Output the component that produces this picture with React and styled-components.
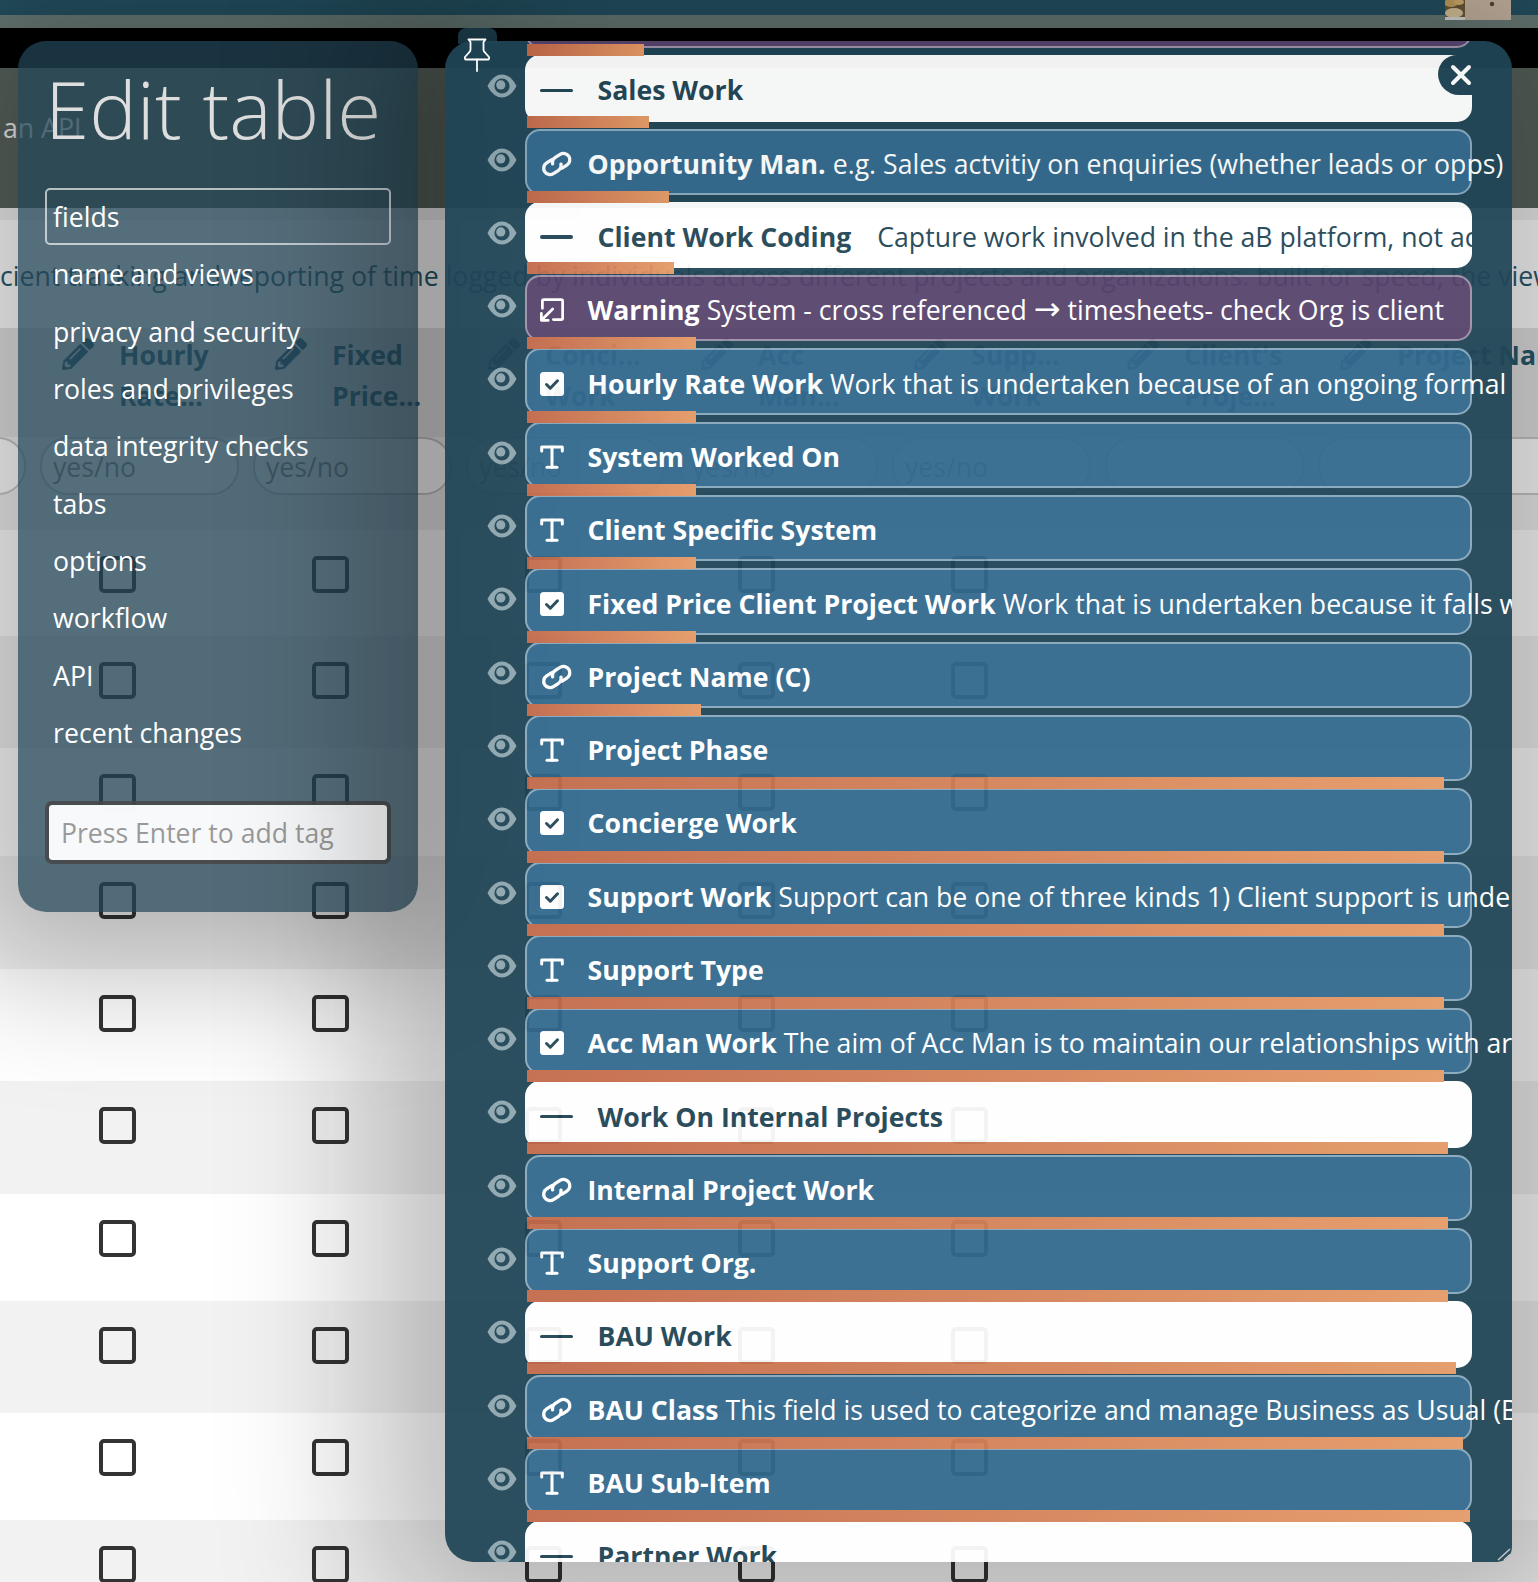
import React from "react";
import styled, { createGlobalStyle } from "styled-components";
import { FaPencilAlt } from "react-icons/fa";

const Global = createGlobalStyle`
  html, body { margin: 0; padding: 0; background: #fff; }
  * { box-sizing: border-box; }
`;

const Page = styled.div`
  position: relative;
  width: 1538px;
  height: 1582px;
  overflow: hidden;
  background: #fff;
  font-family: "Open Sans", "DejaVu Sans", sans-serif;
  font-size: 26.65px;
  color: #2a5a70;
`;
const TopBar = styled.div`height: 15px; background: #245162;`;
const SubBar = styled.div`height: 13px; background: #687a76;`;
const BlackBar = styled.div`height: 40px; background: #000;`;
const Header = styled.div`
  height: 140px;
  background: #59645d;
  padding: 41px 0 0 3px;
  color: #eee;
  line-height: 38px;
`;
const GrayBand = styled.div`height: 12px; background: #f0f0f0;`;
const Description = styled.div`
  height: 108px;
  display: flex;
  align-items: center;
  white-space: nowrap;
  padding-top: 4px;
`;
const TableHead = styled.div`
  display: flex;
  height: 109px;
  margin-left: -180px;
  background: #e3e3e3;
  width: 1900px;
`;
const HeadCell = styled.div`
  flex: 0 0 213px;
  display: flex;
  padding: 10px 0 0 29px;
  gap: 25px;
  font-weight: 700;
  line-height: 40.5px;
  white-space: pre;
  svg { flex: 0 0 32px; width: 32px; height: 32px; }
`;
const HeadLabel = styled.div`margin-top: -3px;`;
const FilterRow = styled.div`
  display: flex;
  height: 93px;
  margin-left: -180px;
  width: 1900px;
  background: #f0f0f0;
`;
const FilterCell = styled.div`
  flex: 0 0 ${p => (p.$last ? 400 : 213)}px;
  padding: 0 7px;
`;
const Pill = styled.div`
  height: 58px;
  border: 2px solid #c9c9c9;
  border-radius: 28px;
  background: #fff;
  padding-left: 11px;
  line-height: 56px;
  color: #8c8c8c;
`;
const DataRow = styled.div`
  display: flex;
  margin-left: -180px;
  width: 1900px;
  height: ${p => p.$h}px;
  background: ${p => (p.$alt ? "#f2f2f2" : "#fff")};
`;
const DataCell = styled.div`flex: 0 0 213px; padding: 26px 0 0 66px;`;
const Check = styled.div`
  width: 37px;
  height: 37px;
  border: 4px solid #333;
  border-radius: 5px;
`;
const Thumb = styled.svg`
  position: absolute;
  left: 1445px;
  top: 0;
  width: 66px;
  height: 20px;
`;

const LeftPanel = styled.aside`
  position: absolute;
  left: 18px;
  top: 41px;
  width: 400px;
  height: 871px;
  border-radius: 28px;
  background: rgba(34, 67, 83, 0.77);
  box-shadow: 0 0 130px 65px rgba(0, 0, 0, 0.25);
  padding: 0 27px;
  color: #fff;
`;
const Title = styled.h1`
  margin: 0;
  height: 147px;
  font-size: 80px;
  font-weight: 300;
  line-height: 134px;
  color: #dedede;
  white-space: nowrap;
`;
const Nav = styled.nav`display: flex; flex-direction: column;`;
const NavItem = styled.div`
  height: 57.3px;
  display: flex;
  align-items: center;
  padding-left: 6px;
  border: 2px solid ${p => (p.$on ? "rgba(255,255,255,.65)" : "transparent")};
  border-radius: 5px;
  white-space: nowrap;
  font-size: 26.7px;
`;
const TagInput = styled.div`
  margin-top: 40px;
  height: 63px;
  width: 346px;
  border: 4px solid rgba(70, 70, 70, 0.85);
  border-radius: 7px;
  background: rgba(255, 255, 255, 0.96);
  background-clip: padding-box;
  color: #999;
  padding-left: 12px;
  line-height: 56px;
  font-size: 26.6px;
  white-space: nowrap;
`;

const RightPanel = styled.section`
  position: absolute;
  left: 444.5px;
  top: 41px;
  width: 1067.5px;
  height: 1521px;
  border-radius: 28px 28px 15px 28px;
  background: #204556;
  opacity: 0.945;
  box-shadow: 0 0 150px 75px rgba(0, 0, 0, 0.265);
`;
const Clip = styled.div`
  position: absolute;
  inset: 0;
  overflow: hidden;
  border-radius: inherit;
`;
const List = styled.div`
  display: flex;
  flex-direction: column;
  gap: 7px;
  margin-top: -59px;
  padding-left: 42.5px;
`;
const Item = styled.div`
  display: flex;
  gap: 8px;
`;
const EyeIcon = styled.svg`
  flex: 0 0 30px;
  width: 30px;
  height: 24px;
  margin-top: 19px;
`;
const Row = styled.div`
  position: relative;
  flex: 0 0 947px;
  min-width: 0;
  height: 66.3px;
  border-radius: 15px;
  background: ${p => ({ white: "#fff", purple: "#57436c", blue: "#32698e" }[p.$kind])};
  border: ${p => (p.$kind === "white" ? "none" : "2px solid rgba(255,255,255,.42)")};
`;
const RowBody = styled.div`
  height: 100%;
  display: flex;
  align-items: center;
  padding: 4px 0 0 ${p => (p.$kind === "white" ? 15 : 13)}px;
  white-space: nowrap;
  overflow: ${p => (p.$kind === "white" ? "hidden" : "visible")};
  border-radius: inherit;
  color: ${p => (p.$kind === "white" ? "#1f4454" : "#fff")};
`;
const IconSlot = styled.span`
  flex: 0 0 ${p => (p.$kind === "white" ? 57.5 : 47.5)}px;
  display: flex;
  align-items: center;
  svg { display: block; overflow: visible; }
`;
const Name = styled.b`font-weight: 700;`;
const Desc = styled.span`
  margin-left: ${p => (p.$kind === "white" ? 26 : 7)}px;
  font-weight: 400;
`;
const Arrow = styled.span`
  font-size: 32px;
  line-height: 1;
`;
const Bar = styled.div`
  position: absolute;
  left: ${p => (p.$kind === "white" ? 2 : 0)}px;
  bottom: ${p => (p.$kind === "white" ? -6 : -10)}px;
  height: 12px;
  background: linear-gradient(to right, #c2694a, #e59a66);
  z-index: 1;
`;
const MinusBar = styled.span`
  display: block;
  width: 33px;
  height: 3.5px;
  border-radius: 2px;
  background: #1f4454;
`;
const PinTab = styled.div`
  position: absolute;
  left: 458px;
  top: 28px;
  width: 39px;
  height: 16px;
  border-radius: 8px 8px 0 0;
  background: #1e4050;
`;
const PinIcon = styled.svg`
  position: absolute;
  left: 464px;
  top: 38px;
  width: 26px;
  height: 34px;
`;
const Close = styled.div`
  position: absolute;
  left: 993.5px;
  top: 14px;
  width: 34px;
  height: 40px;
  background: #204556;
  border-radius: 20px 0 0 22px;
  display: flex;
  align-items: center;
  justify-content: flex-start;
  padding-left: 12px;
`;
const Grip = styled.svg`
  position: absolute;
  right: 1px;
  bottom: 1px;
  width: 16px;
  height: 16px;
`;

const Eye = () => (
  <EyeIcon viewBox="0 0 30 24">
    <path d="M.5 12C5 3.5 10 .5 15 .5S25 3.5 29.5 12C25 20.5 20 23.5 15 23.5S5 20.5 .5 12Z" fill="#8ea6af" />
    <circle cx="15" cy="12" r="7.6" fill="#204556" />
    <circle cx="13.8" cy="10.9" r="4.6" fill="#8ea6af" />
  </EyeIcon>
);
const LinkIcon = () => (
  <svg width="37" height="28" viewBox="0 0 32 24" fill="none" stroke="#fff" strokeWidth="2.9" strokeLinecap="round">
    <g transform="translate(-1.5 0) rotate(-32 16 12)">
      <path d="M14 6.5H9.15a5.5 5.5 0 0 0 0 11H14a5.5 5.5 0 0 0 5-3.5" />
      <path d="M18 17.5h4.85a5.5 5.5 0 0 0 0-11H18a5.5 5.5 0 0 0-5 3.5" />
    </g>
  </svg>
);
const TIcon = () => (
  <svg width="24" height="24" viewBox="0 0 24 24" fill="none" stroke="#fff" strokeWidth="3" strokeLinecap="round" strokeLinejoin="round">
    <path d="M1.7 6V2h20.6v4" />
    <path d="M12 2v20.3" />
    <path d="M7 22.3h10" />
  </svg>
);
const CheckIcon = () => (
  <svg width="24" height="24" viewBox="0 0 24 24">
    <rect width="24" height="24" rx="3.5" fill="#fff" />
    <path d="M6.5 12.5l3.8 3.7 7.2-7.4" fill="none" stroke="#214757" strokeWidth="3" strokeLinecap="round" strokeLinejoin="round" />
  </svg>
);
const JumpIcon = () => (
  <svg width="24" height="24" viewBox="0 0 70 70" fill="none" stroke="#fff" strokeWidth="8" strokeLinecap="round" strokeLinejoin="round">
    <path d="M7 30V9a4 4 0 0 1 4-4h51a4 4 0 0 1 4 4v50a4 4 0 0 1-4 4H39" />
    <path d="M37 32L4 65M4 45v20h20" />
  </svg>
);
const icons = { minus: <MinusBar />, link: <LinkIcon />, t: <TIcon />, check: <CheckIcon />, jump: <JumpIcon /> };

const fields = [
  { kind: "purple", icon: null, bar: 117 },
  { kind: "white", icon: "minus", name: "Sales Work", bar: 122 },
  { kind: "blue", icon: "link", name: "Opportunity Man.", desc: "e.g. Sales actvitiy on enquiries (whether leads or opps)", bar: 142 },
  { kind: "white", icon: "minus", name: "Client Work Coding", desc: "Capture work involved in the aB platform, not actual client work", bar: 147 },
  { kind: "purple", icon: "jump", name: "Warning", desc: <>System - cross referenced <Arrow>→</Arrow> timesheets- check Org is client</>, bar: 169 },
  { kind: "blue", icon: "check", name: "Hourly Rate Work", desc: "Work that is undertaken because of an ongoing formal agreement", bar: 169 },
  { kind: "blue", icon: "t", name: "System Worked On", bar: 169 },
  { kind: "blue", icon: "t", name: "Client Specific System", bar: 169 },
  { kind: "blue", icon: "check", name: "Fixed Price Client Project Work", desc: "Work that is undertaken because it falls within", bar: 169 },
  { kind: "blue", icon: "link", name: "Project Name (C)", bar: 174 },
  { kind: "blue", icon: "t", name: "Project Phase", bar: 917 },
  { kind: "blue", icon: "check", name: "Concierge Work", bar: 917 },
  { kind: "blue", icon: "check", name: "Support Work", desc: "Support can be one of three kinds 1) Client support is undertaken", bar: 917 },
  { kind: "blue", icon: "t", name: "Support Type", bar: 917 },
  { kind: "blue", icon: "check", name: "Acc Man Work", desc: "The aim of Acc Man is to maintain our relationships with areas", bar: 917 },
  { kind: "white", icon: "minus", name: "Work On Internal Projects", bar: 921 },
  { kind: "blue", icon: "link", name: "Internal Project Work", bar: 921 },
  { kind: "blue", icon: "t", name: "Support Org.", bar: 921 },
  { kind: "white", icon: "minus", name: "BAU Work", bar: 929 },
  { kind: "blue", icon: "link", name: "BAU Class", desc: "This field is used to categorize and manage Business as Usual (BAU)", bar: 936 },
  { kind: "blue", icon: "t", name: "BAU Sub-Item", bar: 943 },
  { kind: "white", icon: "minus", name: "Partner Work" },
];

const columns = [
  { label: "", check: true },
  { label: "Hourly\nRate...", check: true },
  { label: "Fixed\nPrice...", check: true },
  { label: "Conci...\nWork", check: true },
  { label: "Acc\nMan...", check: true },
  { label: "Supp...\nWork", check: true },
  { label: "Client's\nProje...", check: false },
  { label: "Project Name", check: false },
];
const rowHeights = [106, 112, 108, 113, 112, 113, 107, 112, 107, 112];
const menu = ["name and views", "privacy and security", "roles and privileges", "data integrity checks", "tabs", "options", "workflow", "API", "recent changes"];

export default function App() {
  return (
    <Page>
      <Global />
      <TopBar />
      <SubBar />
      <BlackBar />
      <Header>an API</Header>
      <GrayBand />
      <Description>cient tracking and reporting of time logged by individuals across different projects and organizations. built for speed, the view</Description>
      <TableHead>
        {columns.map((c, i) => (
          <HeadCell key={i}>
            <FaPencilAlt />
            <HeadLabel>{c.label}</HeadLabel>
          </HeadCell>
        ))}
      </TableHead>
      <FilterRow>
        {columns.map((c, i) => (
          <FilterCell key={i} $last={i === columns.length - 1}>
            <Pill>{c.check ? "yes/no" : ""}</Pill>
          </FilterCell>
        ))}
      </FilterRow>
      {rowHeights.map((h, r) => (
        <DataRow key={r} $h={h} $alt={r % 2 === 1}>
          {columns.map((c, i) => (
            <DataCell key={i}>{c.check && <Check />}</DataCell>
          ))}
        </DataRow>
      ))}
      <Thumb viewBox="0 0 66 20" preserveAspectRatio="none">
        <rect width="66" height="20" fill="#c8b6a2" />
        <rect width="20" height="20" fill="#6b5a3a" />
        <ellipse cx="6" cy="3" rx="7" ry="4" fill="#c4a25f" />
        <ellipse cx="14" cy="2" rx="5" ry="3" fill="#d3b070" />
        <ellipse cx="9" cy="13" rx="9" ry="5" fill="#d9c59b" />
        <rect y="17" width="20" height="3" fill="#d9d9d9" />
        <circle cx="47" cy="4" r="2.2" fill="#5a4630" />
      </Thumb>

      <LeftPanel>
        <Title>Edit table</Title>
        <Nav>
          <NavItem $on>fields</NavItem>
          {menu.map(m => <NavItem key={m}>{m}</NavItem>)}
        </Nav>
        <TagInput>Press Enter to add tag</TagInput>
      </LeftPanel>

      <PinTab />
      <RightPanel>
        <Clip>
          <List>
            {fields.map((f, i) => (
              <Item key={i}>
                <Eye />
                <Row $kind={f.kind}>
                  <RowBody $kind={f.kind}>
                    {f.icon && <IconSlot $kind={f.kind}>{icons[f.icon]}</IconSlot>}
                    {f.name && <Name>{f.name}</Name>}
                    {f.desc && <Desc $kind={f.kind}>{f.desc}</Desc>}
                  </RowBody>
                  {f.bar && <Bar $kind={f.kind} style={{ width: f.bar }} />}
                </Row>
              </Item>
            ))}
          </List>
        </Clip>
        <Close>
          <svg width="22" height="22" viewBox="0 0 22 22" stroke="#fff" strokeWidth="4" strokeLinecap="round">
            <path d="M3 3l16 16M19 3L3 19" />
          </svg>
        </Close>
        <Grip viewBox="0 0 16 16" stroke="#c8c8c8" strokeWidth="1.4">
          <path d="M3 15L15 4M9 15l6-5.5" />
        </Grip>
      </RightPanel>
      <PinIcon viewBox="0 0 26 34" fill="none" stroke="#fff" strokeWidth="1.8" strokeLinejoin="round" strokeLinecap="round">
        <path d="M4.5 1.5h17L19.5 4v8q0 1 1.5 2.5l4 4.5q.5 2.5-1 2.5H2q-1.5 0-1-2.5l4-4.5q1.5-1.5 1.5-2.5V4z" />
        <path d="M13 21.5V33" />
      </PinIcon>
    </Page>
  );
}
